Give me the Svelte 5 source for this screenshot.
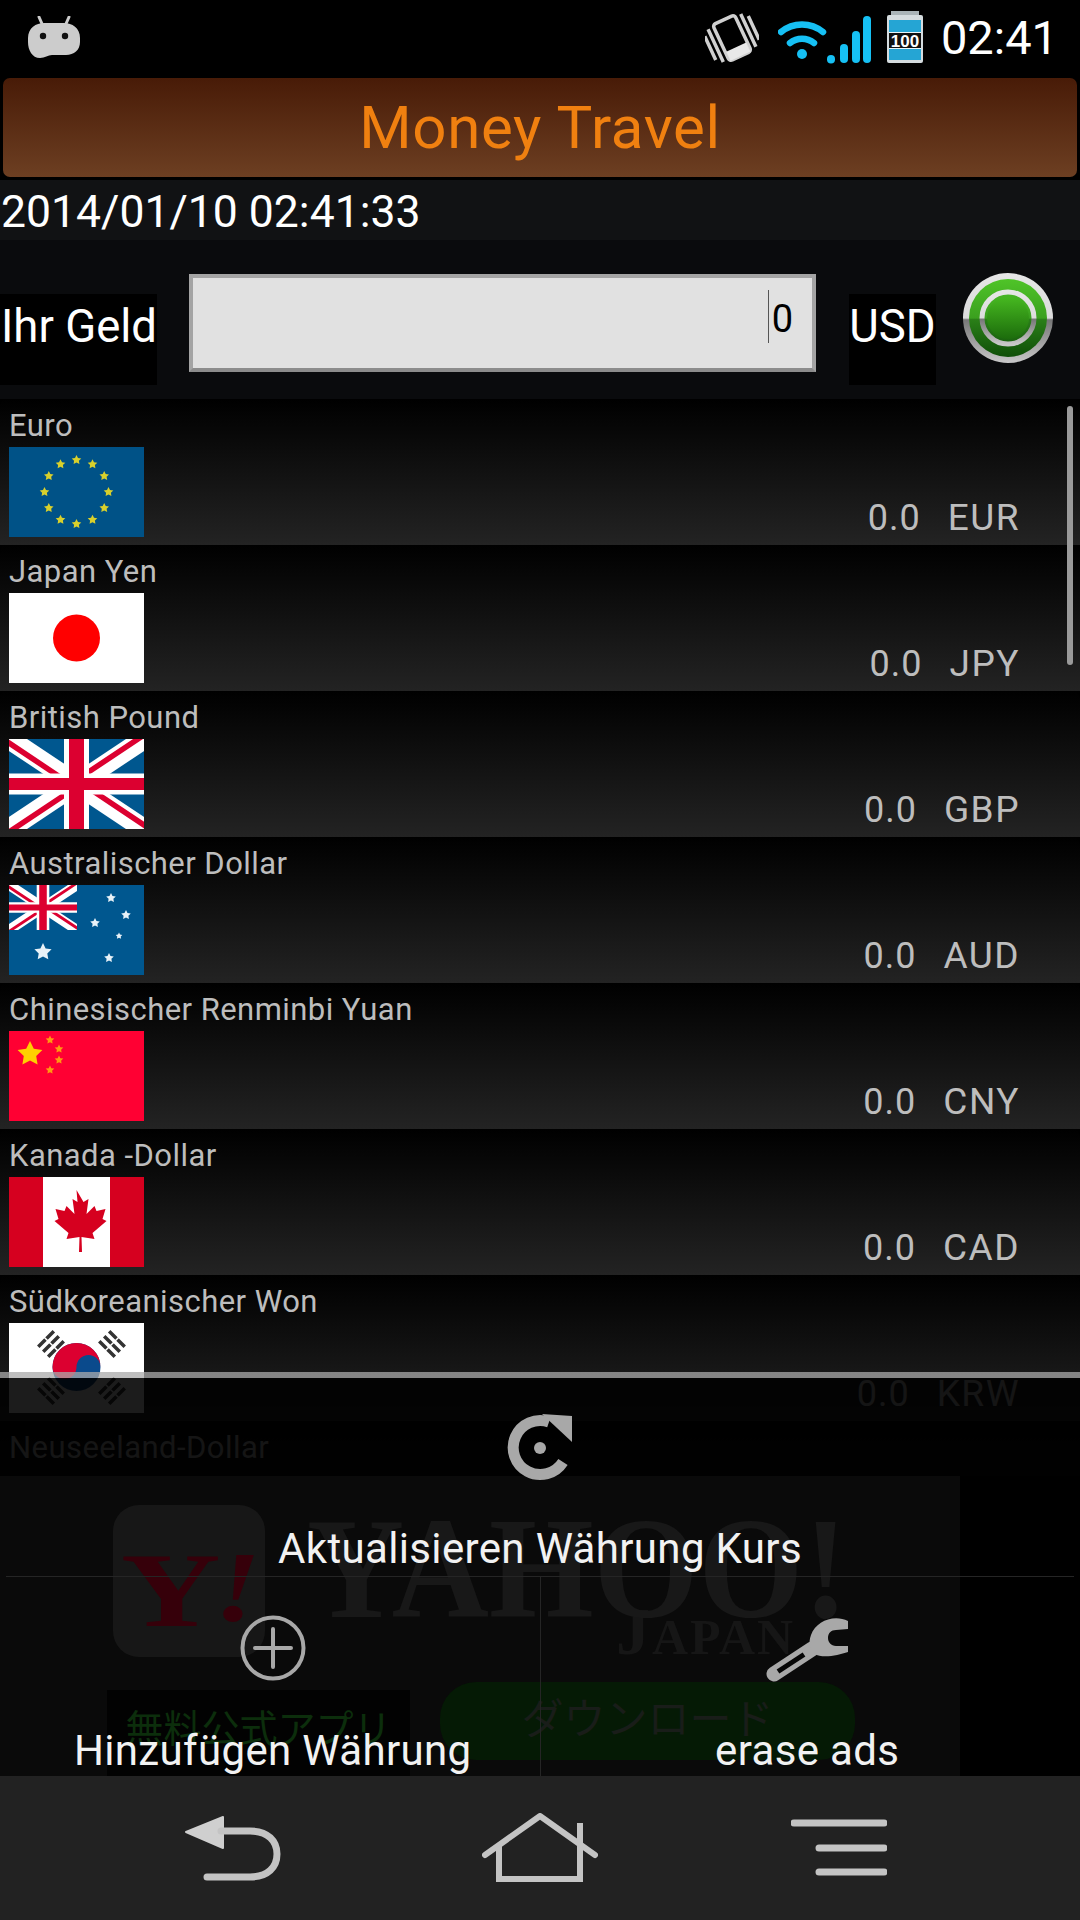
<script>
  const rows = [
    { name: 'Euro', code: 'EUR', flag: 'eu' },
    { name: 'Japan Yen', code: 'JPY', flag: 'jp' },
    { name: 'British Pound', code: 'GBP', flag: 'gb' },
    { name: 'Australischer Dollar', code: 'AUD', flag: 'au' },
    { name: 'Chinesischer Renminbi Yuan', code: 'CNY', flag: 'cn' },
    { name: 'Kanada -Dollar', code: 'CAD', flag: 'ca' },
    { name: 'Südkoreanischer Won', code: 'KRW', flag: 'kr' },
    { name: 'Neuseeland-Dollar', code: 'NZD', flag: 'none' }
  ];
  function starPts(cx, cy, r) {
    const p = [];
    for (let i = 0; i < 10; i++) {
      const a = -Math.PI / 2 + (i * Math.PI) / 5;
      const q = i % 2 ? r * 0.5 : r;
      p.push((cx + q * Math.cos(a)).toFixed(1) + ',' + (cy + q * Math.sin(a)).toFixed(1));
    }
    return p.join(' ');
  }
  const euStars = Array.from({ length: 12 }, (_, i) => {
    const a = (i * Math.PI) / 6;
    return starPts(67.5 + 32 * Math.cos(a), 45 + 32 * Math.sin(a), 5);
  });
  const auStars = [[102, 13, 5], [117, 30, 5], [86, 38, 5], [110, 51, 3.5], [100, 73, 5], [34, 67, 9]];
  const cnStars = [[41, 9], [50, 18], [50, 29], [41, 39]];
  const trigrams = [[42, 21, -45], [103, 21, 45], [42, 68, 45], [103, 68, -45]];
</script>

{#snippet union()}
  <rect x="-8" y="-8" width="151" height="106" fill="#00578f" />
  <path d="M-6 -4L141 94M141 -4L-6 94" stroke="#fff" stroke-width="20" />
  <path d="M-6 0L60 44M141 -8L75 36M-6 97L60 53M141 90L75 46" stroke="#dc0030" stroke-width="5.500" />
  <path d="M67.5 -8V98" stroke="#fff" stroke-width="25" />
  <path d="M-8 45H143" stroke="#fff" stroke-width="21" />
  <path d="M67.5 -8V98" stroke="#dc0030" stroke-width="15" />
  <path d="M-8 45H143" stroke="#dc0030" stroke-width="12" />
{/snippet}

{#snippet flag(kind)}
  <svg class="flag" viewBox="0 0 135 90" width="135" height="90">
    <g class="soft">
      {#if kind === 'eu'}
        <rect x="-8" y="-8" width="151" height="106" fill="#005287" />
        {#each euStars as s}<polygon points={s} fill="#d8d02c" />{/each}
      {:else if kind === 'jp'}
        <rect x="-8" y="-8" width="151" height="106" fill="#fff" />
        <circle cx="67.5" cy="45" r="23.5" fill="#f00" />
      {:else if kind === 'gb'}
        {@render union()}
      {:else if kind === 'au'}
        <rect x="-8" y="-8" width="151" height="106" fill="#00578f" />
        <svg x="0" y="0" width="68" height="45" viewBox="0 0 135 90" preserveAspectRatio="none">{@render union()}</svg>
        {#each auStars as s}<polygon points={starPts(s[0], s[1], s[2])} fill="#e8f2f8" />{/each}
      {:else if kind === 'cn'}
        <rect x="-8" y="-8" width="151" height="106" fill="#ff0033" />
        <polygon points={starPts(21, 23, 13)} fill="#ffd000" />
        {#each cnStars as s}<polygon points={starPts(s[0], s[1], 4.5)} fill="#ff9a10" />{/each}
      {:else if kind === 'ca'}
        <rect x="-8" y="-8" width="151" height="106" fill="#d6001f" />
        <rect x="34" y="-8" width="67" height="106" fill="#fff" />
        <path d="M67.5 13l7 12 5-3-2 15 8-8 2 5 9-2-3 10 4 2-14 12 2 6-13-2 .5 15h-3l.5-15-13 2 2-6-14-12 4-2-3-10 9 2 2-5 8 8-2-15 5 3z" fill="#d6001f" />
      {:else if kind === 'kr'}
        <rect x="-8" y="-8" width="151" height="106" fill="#fff" />
        <circle cx="67.5" cy="44" r="24" fill="#0a4a8c" />
        <path d="M43.5 44a24 24 0 0 1 48 0a12 12 0 0 0-24 0a12 12 0 0 1-24 0z" fill="#dc0030" />
        {#each trigrams as t}
          <g transform="translate({t[0]} {t[1]}) rotate({t[2]})">
            <path d="M-11 -7H11M-11 0H11M-11 7H11" stroke="#333" stroke-width="3.500" />
            <path d="M0 -10V10" stroke="#fff" stroke-width="1.500" />
          </g>
        {/each}
      {/if}
    </g>
  </svg>
{/snippet}

<div class="page">
  <div class="status">
    <svg class="droid" viewBox="0 0 52 42" width="52" height="42">
      <path d="M11 1l4 9M41 1l-4 9" stroke="#ccc" stroke-width="3" stroke-linecap="round" />
      <path d="M0 22C0 12 8 7 16 7h20c8 0 16 5 16 15v4c0 8-6 13-14 13H24c-4 0-7 3-12 3C4 42 0 34 0 26z" fill="#ccc" />
      <circle cx="15" cy="20" r="3.2" fill="#111" /><circle cx="37" cy="20" r="3.2" fill="#111" />
    </svg>
    <div class="status-right">
      <svg viewBox="0 0 54 52" width="54" height="52">
        <g transform="rotate(-25 27 26)" fill="none" stroke="#d0d0d0">
          <rect x="15" y="6" width="24" height="40" rx="3" stroke-width="3.500" />
          <rect x="16" y="36" width="22" height="10" fill="#e8e8e8" stroke="none" />
          <path d="M9 8V44M3 13V39M45 8V44M51 13V39" stroke-width="3.500" />
        </g>
      </svg>
      <svg class="wifi" viewBox="0 0 94 52" width="94" height="52">
        <g fill="none" stroke="#16c0f4" stroke-width="6.500" stroke-linecap="round">
          <path d="M3 20a33 33 0 0 1 42 0" /><path d="M12 31a19 19 0 0 1 24 0" />
        </g>
        <circle cx="24" cy="42" r="5" fill="#16c0f4" />
        <g stroke="#16c0f4" stroke-width="8" stroke-linecap="round">
          <path d="M53 47.500V47" /><path d="M66 47V36" /><path d="M78 47V23" /><path d="M89 47V8" />
        </g>
      </svg>
      <svg class="batt" viewBox="0 0 38 54" width="38" height="54">
        <rect x="5" y="1" width="28" height="6" fill="#aab4b8" />
        <rect x="1" y="5" width="36" height="48" rx="2" fill="#d5dcdf" />
        <rect x="3" y="10" width="32" height="40" fill="#25a5d4" />
        <rect x="3" y="22" width="32" height="17" fill="#e8f4f8" />
        <rect x="3" y="23" width="32" height="15" fill="#111" />
        <text x="19" y="36.500" text-anchor="middle" class="batt-text">100</text>
      </svg>
      <span class="clock">02:41</span>
    </div>
  </div>

  <div class="header"><span>Money Travel</span></div>
  <div class="date">2014/01/10 02:41:33</div>

  <div class="form">
    <div class="lbl lbl-a">Ihr Geld</div>
    <div class="input"><i class="caret"></i><span class="zero">0</span></div>
    <div class="lbl lbl-b">USD</div>
    <svg class="go" viewBox="0 0 94 94" width="94" height="94">
      <defs>
        <linearGradient id="g1" x1="0" y1="0" x2="0" y2="1">
          <stop offset="0" stop-color="#e6e6e6" /><stop offset=".5" stop-color="#dcdcdc" />
          <stop offset=".52" stop-color="#777" /><stop offset="1" stop-color="#c8c8c8" />
        </linearGradient>
        <linearGradient id="g2" x1="0" y1="0" x2="0" y2="1">
          <stop offset="0" stop-color="#4fc428" /><stop offset=".5" stop-color="#3ba01f" />
          <stop offset=".52" stop-color="#2a7f18" /><stop offset="1" stop-color="#0f4f08" />
        </linearGradient>
        <linearGradient id="g3" x1="0" y1="0" x2="0" y2="1">
          <stop offset="0" stop-color="#46b820" /><stop offset="1" stop-color="#1c6c0c" />
        </linearGradient>
      </defs>
      <circle cx="47" cy="47" r="45" fill="url(#g1)" />
      <circle cx="47" cy="47" r="39" fill="url(#g2)" />
      <circle cx="47" cy="47" r="26" fill="none" stroke="url(#g1)" stroke-width="5" />
      <circle cx="47" cy="47" r="21" fill="url(#g3)" />
    </svg>
  </div>

  <div class="list">
    <div class="scroll"></div>
    {#each rows as r}
      <div class="row">
        <div class="left">
          <div class="name">{r.name}</div>
          {#if r.flag !== 'none'}{@render flag(r.flag)}{/if}
        </div>
        <div class="val"><span>0.0</span><span class="code">{r.code}</span></div>
      </div>
    {/each}
  </div>

  <div class="ad">
    <div class="ad-in">
      <div class="ad-logo">
        <div class="ad-icon"><span class="y">Y</span><span class="excl">!</span></div>
        <div class="ad-word">
          <span class="yahoo">YAHOO!</span>
          <span class="japan"><span class="japan-j">J</span>APAN</span>
        </div>
      </div>
      <div class="ad-bottom">
        <div class="ad-free">無料公式アプリ</div>
        <div class="ad-btn">ダウンロード</div>
      </div>
    </div>
  </div>

  <div class="nav">
    <svg viewBox="0 0 96 66" width="96" height="66">
      <path d="M1 17L38 2V33z" fill="#cfcfcf" stroke="#cfcfcf" stroke-width="2" stroke-linejoin="round" />
      <path d="M36 16H65C83 16 92 26 92 39S83 62 65 62H22" fill="none" stroke="#c4c4c4" stroke-width="7" stroke-linecap="round" />
    </svg>
    <svg class="home" viewBox="0 0 116 70" width="116" height="70">
      <path d="M3 42L58 3L113 42" fill="none" stroke="#c4c4c4" stroke-width="6" stroke-linecap="round" stroke-linejoin="round" />
      <path d="M17 32V66H98V10" fill="none" stroke="#c4c4c4" stroke-width="6" />
    </svg>
    <svg viewBox="0 0 96 60" width="96" height="60">
      <path d="M3 5H93M28 30H93M28 54H93" stroke="#c4c4c4" stroke-width="7" stroke-linecap="round" />
    </svg>
  </div>

  <div class="menu">
    <div class="item item-top">
      <svg class="ico" viewBox="0 0 70 70" width="70" height="70">
        <path d="M58 50A27 27 0 1 1 44 10" fill="none" stroke="#a8a8a8" stroke-width="11" />
        <path d="M37 2L67 4V30z" fill="#a8a8a8" />
        <circle cx="35" cy="36" r="6" fill="#a8a8a8" />
      </svg>
      <span class="lab">Aktualisieren Währung Kurs</span>
    </div>
    <div class="bottom">
      <div class="item">
        <svg class="ico" viewBox="0 0 70 70" width="70" height="70">
          <circle cx="35" cy="35" r="30.500" fill="none" stroke="#a8a8a8" stroke-width="4" />
          <path d="M35 16V54M17 35H53" stroke="#a8a8a8" stroke-width="4" stroke-linecap="round" />
        </svg>
        <span class="lab">Hinzufügen Währung</span>
      </div>
      <div class="item">
        <svg class="ico wrench" viewBox="0 0 90 70" width="90" height="70">
          <path d="M10 61L48 36" stroke="#a8a8a8" stroke-width="15" stroke-linecap="round" />
          <path d="M14 58.500L40 41.500" stroke="#060606" stroke-width="5" />
          <path d="M84 8C70 1 52 8 47 22C44 30 46 37 50 41C60 46 74 42 84 39V33L72 33C67 33 64 29 64 25C64 20 67 17 72 17L84 16Z" fill="#a8a8a8" />
        </svg>
        <span class="lab">erase ads</span>
      </div>
    </div>
  </div>
</div>

<style>
  :global(body) { background: #000; }
  .page {
    position: relative; width: 1080px; height: 1920px; overflow: hidden;
    display: flex; flex-direction: column; background: #000;
    font-family: Roboto, "Noto Sans CJK JP", sans-serif; color: #fff;
  }
  .status { height: 78px; flex: none; display: flex; align-items: center; justify-content: space-between; padding: 0 22px 0 28px; box-sizing: border-box; }
  .droid { margin-top: -4px; }
  .status-right { display: flex; align-items: center; margin-top: -3px; }
  .wifi { margin-left: 19px; }
  .batt { margin-left: 14px; margin-top: -2px; }
  .batt-text { font: bold 17px "Liberation Sans", sans-serif; fill: #fff; }
  .clock { font-size: 47px; margin-left: 17px; line-height: 52px; }
  .header {
    flex: none; height: 99px; margin: 0 3px 3px; border-radius: 7px;
    background: linear-gradient(#481b07, #6d3f22);
    display: flex; align-items: center; justify-content: center;
    color: #f08010; font-size: 60px; letter-spacing: .7px; line-height: 104px;
  }
  .date { flex: none; height: 60px; background: #111214; font-size: 44.500px; line-height: 64px; padding-left: 1px; }
  .form { flex: none; height: 159px; background: #0a0b0d; display: flex; align-items: flex-start; }
  .lbl { background: #000; height: 91px; margin-top: 54px; font-size: 45.500px; line-height: 66px; box-sizing: border-box; white-space: nowrap; }
  .lbl-a { width: 157px; padding-left: 1px; }
  .lbl-b { width: 87px; margin-left: 33px; text-align: center; }
  .input {
    margin: 34px 0 0 32px; width: 627px; height: 98px; box-sizing: border-box;
    background: #e1e1e1; border: 4px solid #a4a4a4; border-bottom-color: #8c8c8c;
    display: flex; justify-content: flex-end; align-items: flex-start; padding: 12px 19px 0 0;
    color: #000; font-size: 38px; line-height: 46px;
  }
  .caret { width: 1px; height: 53px; background: #555; margin-right: 3px; }
  .zero { margin-top: 6px; }
  .go { margin: 31px 0 0 25px; filter: blur(.5px); }
  .list { flex: 1; position: relative; overflow: hidden; min-height: 0; }
  .scroll { position: absolute; top: 7px; right: 7px; width: 6px; height: 259px; background: #9a9a9a; border-radius: 3px; z-index: 1; }
  .row {
    height: 146px; box-sizing: border-box; display: flex; justify-content: space-between;
    background: linear-gradient(#000, #232323); border-top-left-radius: 7px; border-top-right-radius: 7px;
    color: #bdbdbd;
  }
  .left { padding-left: 9px; display: flex; flex-direction: column; align-items: flex-start; }
  .name { font-size: 31px; letter-spacing: .45px; line-height: 43px; padding-top: 5px; white-space: nowrap; }
  .flag { display: block; }
  .soft { filter: blur(.6px); }
  .val { align-self: flex-end; display: flex; gap: 27px; font-size: 36px; letter-spacing: 1px; line-height: 44px; padding: 0 60px 5px 0; }
  .code { font-size: 37px; letter-spacing: 1.500px; }
  .ad { flex: none; height: 300px; background: #000; }
  .ad-in { width: 960px; height: 300px; background: #0a0a0a; padding-left: 107px; box-sizing: border-box; overflow: hidden; }
  .ad-logo { display: flex; height: 214px; padding-top: 29px; box-sizing: border-box; }
  .ad-icon { flex: none; margin-left: 6px; width: 152px; height: 152px; border-radius: 26px; background: #171717; display: flex; align-items: center; padding-left: 8px; box-sizing: border-box; }
  .y { font: bold 106px/1 "Liberation Serif", serif; color: #36000a; transform: scaleX(1.3); transform-origin: left; display: inline-block; width: 97px; margin-top: 20px; }
  .excl { font: italic bold 100px/1 "Liberation Serif", serif; color: #36000a; display: inline-block; margin-top: 12px; transform: scaleX(1.2); }
  .ad-word { margin-left: 42px; width: 520px; display: flex; flex-direction: column; align-items: flex-start; }
  .yahoo { font: bold 144px/108px "Liberation Serif", serif; color: #181818; margin-top: 10px; white-space: nowrap; transform: scaleX(.935); transform-origin: left; }
  .japan { font: bold 50px/56px "Liberation Serif", serif; color: #161616; margin: -20px 0 0 309px; white-space: nowrap; letter-spacing: 2px; }
  .japan-j { font-size: 68px; }
  .ad-bottom { display: flex; align-items: flex-start; }
  .ad-free { width: 303px; height: 86px; background: #020202; color: #0c2e0c; font-size: 38px; line-height: 78px; text-align: center; white-space: nowrap; }
  .ad-btn { width: 415px; height: 78px; margin: -8px 0 0 30px; border-radius: 36px; background: #051a05; color: #191d19; font-size: 42px; line-height: 76px; text-align: center; white-space: nowrap; }
  .nav { flex: none; height: 144px; background: #222; display: flex; align-items: center; padding: 0 193px 0 185px; justify-content: space-between; box-sizing: border-box; }
  .home { margin-left: 8px; }
  .menu {
    position: absolute; left: 0; right: 0; bottom: 144px; height: 404px; box-sizing: border-box;
    border-top: 6px solid rgba(170,170,170,.75);
    background: linear-gradient(rgba(0,0,0,.89) 98px, rgba(0,0,0,0) 98px);
    display: flex; flex-direction: column;
  }
  .item { display: flex; flex-direction: column; align-items: center; padding-top: 36px; height: 199px; box-sizing: border-box; flex: 1; }
  .item-top { flex: none; padding-top: 34px; border-bottom: 1px solid #252525; margin: 0 6px; }
  .ico { display: block; }
  .wrench { margin-left: 3px; }
  .lab { font-size: 42px; letter-spacing: .35px; line-height: 48px; margin-top: 44px; color: #f2f2f2; white-space: nowrap; }
  .item-top .lab { margin-top: 43px; }
  .bottom { display: flex; flex: 1; margin: 0 6px; }
  .bottom .item + .item { border-left: 1px solid #252525; }
</style>
